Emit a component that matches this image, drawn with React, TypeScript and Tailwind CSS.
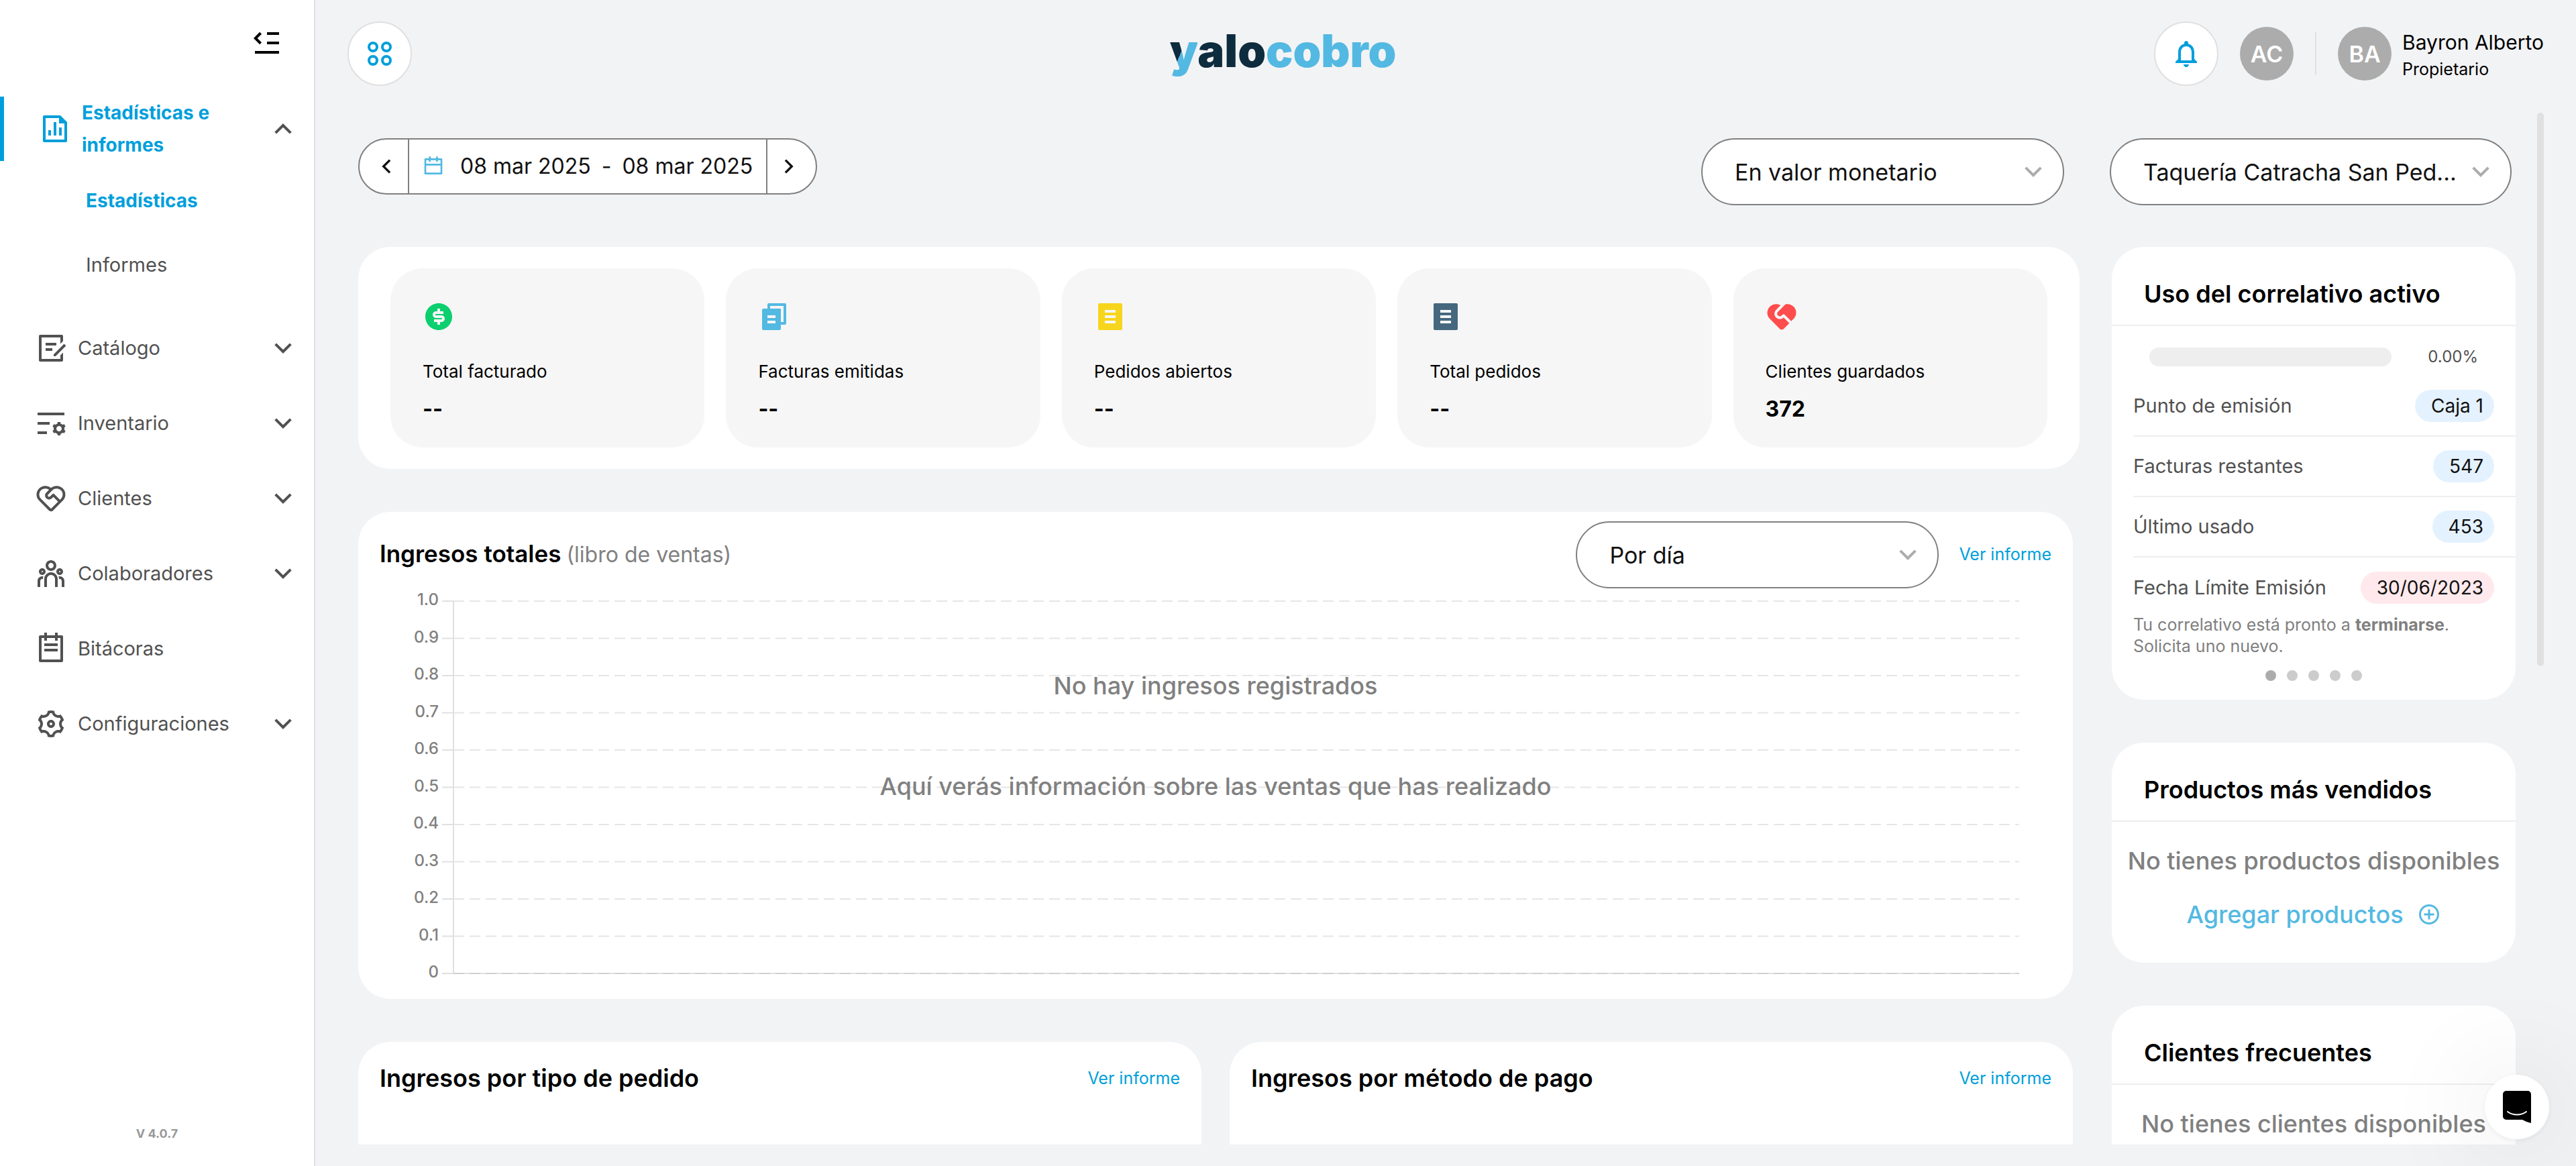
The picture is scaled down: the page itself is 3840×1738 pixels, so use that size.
import type { ReactNode } from "react";
import type { IconType } from "react-icons";
import { MdNotificationsNone } from "react-icons/md";
import {
  RiAddCircleLine,
  RiArrowDownSLine,
  RiArrowLeftSLine,
  RiArrowRightSLine,
  RiArrowUpSLine,
  RiCalendarLine,
  RiDraftLine,
  RiFileChartLine,
  RiFileCopy2Fill,
  RiFileListFill,
  RiListSettingsLine,
  RiMenuFoldLine,
  RiMoneyDollarCircleFill,
  RiServiceFill,
  RiServiceLine,
  RiSettings3Line,
  RiTeamLine,
  RiTodoLine,
} from "react-icons/ri";

type NavEntry = { label: string; icon: IconType; expandable: boolean };

const NAV: NavEntry[] = [
  { label: "Catálogo", icon: RiDraftLine, expandable: true },
  { label: "Inventario", icon: RiListSettingsLine, expandable: true },
  { label: "Clientes", icon: RiServiceLine, expandable: true },
  { label: "Colaboradores", icon: RiTeamLine, expandable: true },
  { label: "Bitácoras", icon: RiTodoLine, expandable: false },
  { label: "Configuraciones", icon: RiSettings3Line, expandable: true },
];

const STATS: { label: string; value: string; icon: IconType; cls: string }[] = [
  { label: "Total facturado", value: "--", icon: RiMoneyDollarCircleFill, cls: "text-[#0ccf6f]" },
  { label: "Facturas emitidas", value: "--", icon: RiFileCopy2Fill, cls: "text-[#53b9e2]" },
  { label: "Pedidos abiertos", value: "--", icon: RiFileListFill, cls: "text-[#f7d51d]" },
  { label: "Total pedidos", value: "--", icon: RiFileListFill, cls: "text-[#45687f]" },
  { label: "Clientes guardados", value: "372", icon: RiServiceFill, cls: "text-[#ff4d4d]" },
];

const CORRELATIVE: { label: string; value: string; cls: string }[] = [
  { label: "Punto de emisión", value: "Caja 1", cls: "bg-[#e4f2ff]" },
  { label: "Facturas restantes", value: "547", cls: "bg-[#e4f2ff]" },
  { label: "Último usado", value: "453", cls: "bg-[#e4f2ff]" },
  { label: "Fecha Límite Emisión", value: "30/06/2023", cls: "bg-[#ffe9ec]" },
];

const TICKS = ["1.0", "0.9", "0.8", "0.7", "0.6", "0.5", "0.4", "0.3", "0.2", "0.1", "0"];

// Plot geometry, in px of the chart's own svg
const PLOT_TOP = 19;
const PLOT_STEP = 55.5;
const AXIS_X = 142;

function Sidebar() {
  return (
    <aside className="flex w-[470px] shrink-0 flex-col border-r-2 border-[#e0e0e0] bg-white text-[29px] text-[#515151]">
      <div className="flex h-36 items-start justify-end pt-10 pr-[46px]">
        <button type="button" aria-label="Contraer menú" className="text-black">
          <RiMenuFoldLine className="size-12" />
        </button>
      </div>
      <nav className="flex-1">
        <button
          type="button"
          aria-expanded="true"
          className="flex w-full items-center gap-4 border-l-6 border-[#009fdb] pr-[22px] pl-[52px] text-left text-[28px] leading-12 font-bold text-[#009fdb]"
        >
          <RiFileChartLine className="size-12 shrink-0" />
          <span className="w-56">Estadísticas e informes</span>
          <RiArrowUpSLine className="ml-auto size-12 shrink-0 text-[#515151]" />
        </button>
        <div className="flex flex-col pt-[11px] pb-5">
          <a href="#estadisticas" className="flex h-24 items-center pl-32 text-[28px] font-bold text-[#009fdb]">
            Estadísticas
          </a>
          <a href="#informes" className="flex h-24 items-center pl-32">
            Informes
          </a>
        </div>
        {NAV.map(({ label, icon: Icon, expandable }) => (
          <button
            key={label}
            type="button"
            className="flex h-28 w-full items-center gap-4 pr-[22px] pl-[52px] text-left"
          >
            <Icon className="size-12 shrink-0" />
            {label}
            {expandable && <RiArrowDownSLine className="ml-auto size-12 shrink-0" />}
          </button>
        ))}
      </nav>
      <p className="pb-9 text-center text-[18px] leading-6 font-bold text-[#999]">V 4.0.7</p>
    </aside>
  );
}

function Logo() {
  return (
    <div className="pb-2 text-[67px] leading-16 font-black">
      <span className="bg-[linear-gradient(113deg,#0d2c3d_46%,#53b9e2_46%)] bg-clip-text text-transparent">
        y
      </span>
      <span className="text-[#0d2c3d]">alo</span>
      <span className="text-[#53b9e2]">cobro</span>
    </div>
  );
}

function Avatar({ initials }: { initials: string }) {
  return (
    <span className="flex size-20 items-center justify-center rounded-full bg-[#acacac] text-[34px] font-semibold text-white">
      {initials}
    </span>
  );
}

function Header() {
  return (
    <header className="flex h-40 shrink-0 items-center justify-between px-12">
      <button
        type="button"
        aria-label="Aplicaciones"
        className="flex size-24 items-center justify-center rounded-full border-2 border-[#e0e0e0] bg-white"
      >
        <svg viewBox="0 0 36 36" className="size-9 fill-none stroke-[#009fdb] stroke-[4]">
          <circle cx="8" cy="8" r="6" />
          <circle cx="28" cy="8" r="6" />
          <circle cx="8" cy="28" r="6" />
          <circle cx="28" cy="28" r="6" />
        </svg>
      </button>
      <Logo />
      <div className="flex items-center gap-8">
        <button
          type="button"
          aria-label="Notificaciones"
          className="flex size-24 items-center justify-center rounded-full border-2 border-[#e0e0e0] bg-white text-[#009fdb]"
        >
          <MdNotificationsNone className="size-12" />
        </button>
        <Avatar initials="AC" />
        <div className="h-16 w-[2px] bg-[#e0e0e0]" />
        <div className="flex items-center gap-4">
          <Avatar initials="BA" />
          <div className="pt-1.5 text-black">
            <p className="text-[30px] leading-10">Bayron Alberto</p>
            <p className="text-[25px] leading-10">Propietario</p>
          </div>
        </div>
      </div>
    </header>
  );
}

function SelectBox({ label, value, cls }: { label: string; value: string; cls: string }) {
  return (
    <div className={`relative shrink-0 ${cls}`}>
      <select
        aria-label={label}
        className="h-[100px] w-full appearance-none rounded-full border-2 border-[#808080] bg-white pr-20 pl-12 text-[34px] text-[#111]"
      >
        <option>{value}</option>
      </select>
      <RiArrowDownSLine className="pointer-events-none absolute top-[26px] right-[22px] size-12 text-[#acacac]" />
    </div>
  );
}

function DateRange() {
  return (
    <div className="flex h-[84px] divide-x-2 divide-[#808080] overflow-hidden rounded-full border-2 border-[#808080] bg-white text-[#111]">
      <button type="button" aria-label="Día anterior" className="flex w-[74px] items-center justify-center pl-2">
        <RiArrowLeftSLine className="size-10" />
      </button>
      <button type="button" className="flex w-[534px] items-center pl-5 text-[32px]">
        <RiCalendarLine className="mr-6 size-8 text-[#53b9e2]" />
        <span className="flex gap-4">
          <span>08 mar 2025</span>
          <span>-</span>
          <span>08 mar 2025</span>
        </span>
      </button>
      <button type="button" aria-label="Día siguiente" className="flex w-[72px] items-center justify-center pr-2">
        <RiArrowRightSLine className="size-10" />
      </button>
    </div>
  );
}

function StatCards() {
  return (
    <section className="grid grid-cols-5 gap-8 rounded-[48px] bg-white px-12 py-8">
      {STATS.map(({ label, value, icon: Icon, cls }) => (
        <div key={label} className="rounded-[48px] bg-[#f6f6f6] px-12 pt-12 pb-[35px] text-black">
          <Icon className={`size-12 ${cls}`} />
          <p className="mt-10 text-[26px] leading-9">{label}</p>
          <p className="mt-4 text-[32px] leading-11 font-bold">{value}</p>
        </div>
      ))}
    </section>
  );
}

function ReportLink() {
  return (
    <a href="#informe" className="text-[25px] text-[#009fdb]">
      Ver informe
    </a>
  );
}

function IncomeChart() {
  return (
    <section className="mr-[10px] rounded-[48px] bg-white pt-[14px]">
      <div className="flex items-center px-8">
        <h2 className="pb-1 text-[35px] font-semibold text-black">Ingresos totales</h2>
        <span className="ml-2 text-[32px] text-[#808080]">(libro de ventas)</span>
        <SelectBox label="Agrupar" value="Por día" cls="mr-[30px] ml-auto w-[541px]" />
        <ReportLink />
      </div>
      <div className="relative h-[612px] pr-20">
        <svg className="h-full w-full">
          {TICKS.map((tick, i) => {
            const y = PLOT_TOP + i * PLOT_STEP;
            const last = i === TICKS.length - 1;
            return (
              <g key={tick} strokeWidth="2">
                <text x="120" y={y + 6} textAnchor="end" className="fill-[#808080] text-[24px] font-medium">
                  {tick}
                </text>
                <line x1="125" x2={AXIS_X} y1={y} y2={y} stroke="#e0e0e0" />
                {last && <line x1={AXIS_X} x2="100%" y1={y} y2={y} stroke="#e0e0e0" />}
                <line
                  x1={AXIS_X}
                  x2="100%"
                  y1={y}
                  y2={y}
                  stroke={last ? "#d0d0d0" : "#e6e6e6"}
                  strokeDasharray="16 8"
                />
              </g>
            );
          })}
          <line
            x1={AXIS_X}
            x2={AXIS_X}
            y1={PLOT_TOP}
            y2={PLOT_TOP + 10 * PLOT_STEP}
            stroke="#e0e0e0"
            strokeWidth="2"
          />
        </svg>
        <div className="absolute inset-x-0 top-[120px] flex flex-col items-center gap-[100px] text-[36px] leading-[50px] font-medium text-[#808080]">
          <p>No hay ingresos registrados</p>
          <p>Aquí verás información sobre las ventas que has realizado</p>
        </div>
      </div>
    </section>
  );
}

function IncomeCard({ title }: { title: string }) {
  return (
    <section className="flex h-[500px] items-start justify-between rounded-[48px] bg-white px-8 pt-[30px] leading-12">
      <h2 className="text-[36px] font-semibold text-black">{title}</h2>
      <ReportLink />
    </section>
  );
}

function SideCard({ title, children }: { title: string; children: ReactNode }) {
  return (
    <section className="rounded-[48px] bg-white">
      <h2 className="border-b-2 border-[#eee] px-12 pt-[46px] pb-[22px] text-[36px] leading-12 font-semibold text-black">
        {title}
      </h2>
      {children}
    </section>
  );
}

function CorrelativeCard() {
  return (
    <SideCard title="Uso del correlativo activo">
      <div className="flex h-[75px] items-center justify-between px-14 pt-4">
        <div className="h-7 w-[361px] rounded-full bg-[#eee]" />
        <span className="text-[24px] text-[#515151]">0.00%</span>
      </div>
      <dl className="divide-y-2 divide-[#eee] pl-8">
        {CORRELATIVE.map((row) => (
          <div key={row.label} className="flex h-[90px] items-center justify-between pr-8">
            <dt className="text-[29px] text-[#515151]">{row.label}</dt>
            <dd className={`flex h-12 items-center rounded-full pr-4 pl-6 text-[28px] text-[#111] ${row.cls}`}>
              {row.value}
            </dd>
          </div>
        ))}
      </dl>
      <p className="-mt-1.5 px-8 text-[25px] leading-8 text-[#808080]">
        Tu correlativo está pronto a <b>terminarse</b>.
        <br />
        Solicita uno nuevo.
      </p>
      <div className="flex justify-center gap-4 pt-5 pb-7">
        <span className="size-4 rounded-full bg-[#acacac]" />
        <span className="size-4 rounded-full bg-[#ccc]" />
        <span className="size-4 rounded-full bg-[#ccc]" />
        <span className="size-4 rounded-full bg-[#ccc]" />
        <span className="size-4 rounded-full bg-[#ccc]" />
      </div>
    </SideCard>
  );
}

function ChatButton() {
  return (
    <button
      type="button"
      aria-label="Abrir chat"
      className="fixed right-10 bottom-10 flex size-24 items-center justify-center rounded-full bg-white shadow-[0_2px_12px_rgba(0,0,0,0.06),0_4px_160px_rgba(0,0,0,0.16)]"
    >
      <svg viewBox="0 0 42 48" className="h-12">
        <path d="M5 0h32a5 5 0 0 1 5 5v43c-5-1-9-3-13-5H5a5 5 0 0 1-5-5V5a5 5 0 0 1 5-5z" />
        <path d="M7 31c8 6 20 6 28 0" className="fill-none stroke-white stroke-2" strokeLinecap="round" />
      </svg>
    </button>
  );
}

export default function App() {
  return (
    <div className="flex h-screen overflow-hidden bg-[#f2f3f5] font-[Inter,sans-serif]">
      <Sidebar />
      <div className="flex min-w-0 flex-1 flex-col">
        <Header />
        <main className="relative mb-8 min-h-0 flex-1 overflow-hidden pt-[46px] pr-[90px] pl-16">
          <div className="flex items-start pr-[6px]">
            <DateRange />
            <SelectBox label="Tipo de valor" value="En valor monetario" cls="mr-[68px] ml-auto w-[541px]" />
            <SelectBox label="Sucursal" value="Taquería Catracha San Ped..." cls="w-[599px]" />
          </div>
          <div className="mt-[62px] flex gap-12">
            <div className="flex min-w-0 flex-1 flex-col gap-16">
              <StatCards />
              <IncomeChart />
              <div className="mr-[10px] grid grid-cols-2 gap-[42px]">
                <IncomeCard title="Ingresos por tipo de pedido" />
                <IncomeCard title="Ingresos por método de pago" />
              </div>
            </div>
            <div className="flex w-[602px] shrink-0 flex-col gap-16">
              <CorrelativeCard />
              <SideCard title="Productos más vendidos">
                <div className="flex flex-col items-center gap-8 pt-[34px] pb-12 text-[36px] leading-12 font-medium whitespace-nowrap">
                  <p className="text-[#808080]">No tienes productos disponibles</p>
                  <a href="#agregar" className="flex items-center gap-5 text-[#53b9e2]">
                    Agregar productos
                    <RiAddCircleLine className="size-9" />
                  </a>
                </div>
              </SideCard>
              <SideCard title="Clientes frecuentes">
                <p className="h-80 pt-[34px] text-center text-[36px] leading-12 font-medium whitespace-nowrap text-[#808080]">
                  No tienes clientes disponibles
                </p>
              </SideCard>
            </div>
          </div>
          <div className="absolute top-2 right-12 h-[825px] w-[10px] rounded-full bg-[#e0e0e0]" />
        </main>
      </div>
      <ChatButton />
    </div>
  );
}
